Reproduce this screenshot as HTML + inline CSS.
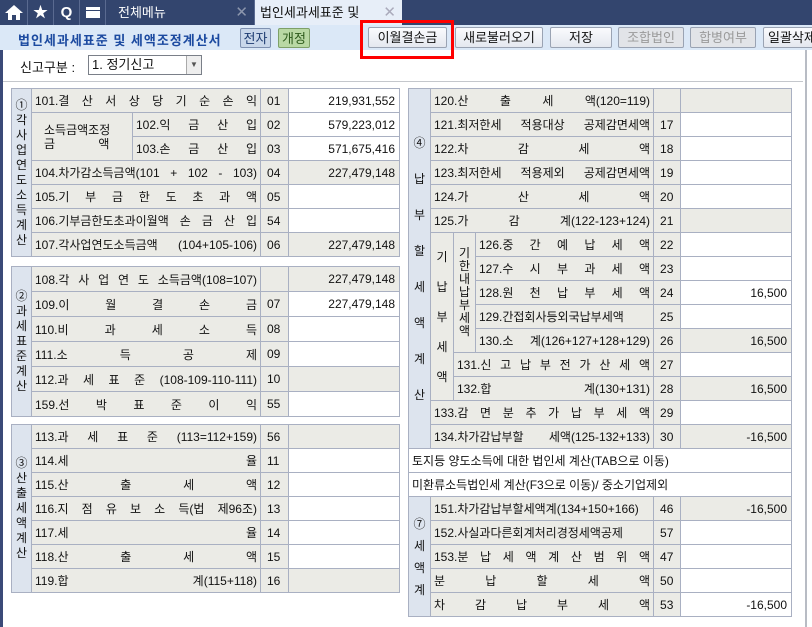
<!DOCTYPE html>
<html><head><meta charset="utf-8"><style>
*{box-sizing:border-box;margin:0;padding:0}
body{width:812px;height:627px;overflow:hidden;background:#fff;font-family:"Liberation Sans","Noto Sans CJK KR","NanumGothic",sans-serif;font-size:12px;color:#111;position:relative}
.top{position:absolute;left:0;top:0;width:812px;height:25px;background:#33456e}
.ic{position:absolute;top:0;height:25px;border-right:1px solid #5a6a90;color:#fff;font-weight:bold;font-size:15px;text-align:center;line-height:25px}
.tab{position:absolute;top:0;height:25px;line-height:25px;font-size:13px;color:#fff;padding-left:12px}
.x{position:absolute;right:6px;top:0;color:#8c96ad;font-size:15px}
.bar{position:absolute;left:0;top:25px;width:812px;height:25px;background:#dbe8f7}
.title{position:absolute;left:18px;top:30px;color:#1c4aa0;font-weight:bold;font-size:13px;letter-spacing:1px}
.b{position:absolute;top:27px;height:21px;border:1px solid #9aa3b3;border-radius:2px;background:linear-gradient(#fafbfd,#e4e8ef);text-align:center;line-height:19px;font-size:13px}
.dis{color:#9a9a9a;background:#e2e4e8}
table{position:absolute;border-collapse:collapse;table-layout:fixed}
td{border:1px solid #a9b0c2;height:24px;background:#ebebe6;padding:0 3px;white-space:nowrap;overflow:hidden;font-size:12px}
td.s{background:#dde4ee;text-align:center;line-height:15px;vertical-align:middle;padding:0}
td.l{text-align:justify;text-align-last:justify}
td.c{text-align:left;padding-left:6px}
td.v{text-align:right;padding-right:4px;background:#fff}
td.g{background:#ebebe6}
td.w{background:#fff;text-align:left;font-size:12px}
</style></head><body>
<div class="top"></div>
<div class="ic" style="left:0;width:28px"><svg width="28" height="25" viewBox="0 0 28 25"><path d="M14 5 L5 13 H8 V20 H12 V15 H16 V20 H20 V13 H23 Z" fill="#fff"/></svg></div>
<div class="ic" style="left:28px;width:26px">&#9733;</div>
<div class="ic" style="left:54px;width:26px">Q</div>
<div class="ic" style="left:80px;width:26px"><div style="position:absolute;left:6px;top:7px;width:14px;height:11px;background:#fff;border-top:3px solid #fff"></div><div style="position:absolute;left:6px;top:10px;width:14px;height:1px;background:#33456e"></div></div>
<div class="tab" style="left:106px;width:149px;background:#33456e;border-right:1px solid #5a6a90">전체메뉴<span class="x">✕</span></div>
<div class="tab" style="left:255px;width:147px;background:#e7eef8;color:#111;padding-left:5px">법인세과세표준 및<span class="x" style="color:#aab">✕</span></div>
<div class="bar"></div>
<div class="title">법인세과세표준 및 세액조정계산서</div>
<div class="b" style="left:240px;width:31px;top:28px;height:20px;background:#c9d7ea;border-color:#7e90b0;color:#1c3a70">전자</div>
<div class="b" style="left:278px;width:32px;top:28px;height:20px;background:#b9d8a4;border-color:#7ea068;color:#2d5a1c">개정</div>
<div class="b" style="left:368px;width:79px">이월결손금</div>
<div class="b" style="left:455px;width:88px">새로불러오기</div>
<div class="b" style="left:550px;width:62px">저장</div>
<div class="b dis" style="left:618px;width:66px">조합법인</div>
<div class="b dis" style="left:690px;width:66px">합병여부</div>
<div class="b" style="left:763px;width:60px;text-align:left;padding-left:4px">일괄삭제</div>
<div style="position:absolute;left:360px;top:20px;width:94px;height:39px;border:3px solid #f00"></div>
<div style="position:absolute;left:0;top:50px;width:3px;height:577px;background:#3b4a78"></div>
<div style="position:absolute;left:805px;top:50px;width:2px;height:577px;background:#b8bcc4"></div>
<div style="position:absolute;left:20px;top:57px;font-size:13px">신고구분 :</div>
<div style="position:absolute;left:88px;top:55px;width:114px;height:20px;border:1px solid #7a7f88;background:#fff;font-size:13px;padding-left:3px;line-height:18px">1. 정기신고<div style="position:absolute;right:0;top:0;width:15px;height:18px;border-left:1px solid #aaa;background:#eee;font-size:8px;text-align:center;color:#555">▼</div></div>
<div style="position:absolute;left:3px;top:81px;width:800px;height:1px;background:#c4c7cc"></div>

<table style="left:11px;top:88px;width:388px">
<col style="width:20px"><col style="width:101px"><col style="width:128px"><col style="width:28px"><col style="width:111px">
<tr><td class="s" rowspan="7">①<br>각<br>사<br>업<br>연<br>도<br>소<br>득<br>계<br>산</td><td class="l" colspan="2">101.결 산 서 상 당 기 순 손 익</td><td class="c">01</td><td class="v">219,931,552</td></tr>
<tr><td rowspan="2" style="padding-left:12px;line-height:14px">소득금액조정<br>금 &nbsp; &nbsp; &nbsp; &nbsp; &nbsp; &nbsp; 액</td><td class="l">102.익 금 산 입</td><td class="c">02</td><td class="v">579,223,012</td></tr>
<tr><td class="l">103.손 금 산 입</td><td class="c">03</td><td class="v">571,675,416</td></tr>
<tr><td class="l" colspan="2">104.차가감소득금액(101 + 102 - 103)</td><td class="c">04</td><td class="v g">227,479,148</td></tr>
<tr><td class="l" colspan="2">105.기 부 금 한 도 초 과 액</td><td class="c">05</td><td class="v"></td></tr>
<tr><td class="l" colspan="2">106.기부금한도초과이월액 손 금 산 입</td><td class="c">54</td><td class="v"></td></tr>
<tr><td class="l" colspan="2">107.각사업연도소득금액 (104+105-106)</td><td class="c">06</td><td class="v g">227,479,148</td></tr>
</table>

<table style="left:11px;top:266px;width:388px">
<col style="width:20px"><col style="width:229px"><col style="width:28px"><col style="width:111px">
<tr><td class="s" rowspan="6" style="height:150px">②<br>과<br>세<br>표<br>준<br>계<br>산</td><td class="l" style="height:25px">108.각 사 업 연 도 소득금액(108=107)</td><td class="c"></td><td class="v g">227,479,148</td></tr>
<tr><td class="l" style="height:25px">109.이 월 결 손 금</td><td class="c">07</td><td class="v">227,479,148</td></tr>
<tr><td class="l" style="height:25px">110.비 과 세 소 득</td><td class="c">08</td><td class="v"></td></tr>
<tr><td class="l" style="height:25px">111.소 득 공 제</td><td class="c">09</td><td class="v"></td></tr>
<tr><td class="l" style="height:25px">112.과 세 표 준 (108-109-110-111)</td><td class="c">10</td><td class="v g"></td></tr>
<tr><td class="l" style="height:25px">159.선 박 표 준 이 익</td><td class="c">55</td><td class="v"></td></tr>
</table>

<table style="left:11px;top:424px;width:388px">
<col style="width:20px"><col style="width:229px"><col style="width:28px"><col style="width:111px">
<tr><td class="s" rowspan="7">③<br>산<br>출<br>세<br>액<br>계<br>산</td><td class="l">113.과 세 표 준 (113=112+159)</td><td class="c">56</td><td class="v g"></td></tr>
<tr><td class="l">114.세 율</td><td class="c">11</td><td class="v"></td></tr>
<tr><td class="l">115.산 출 세 액</td><td class="c">12</td><td class="v"></td></tr>
<tr><td class="l">116.지 점 유 보 소 득(법 제96조)</td><td class="c">13</td><td class="v"></td></tr>
<tr><td class="l">117.세 율</td><td class="c">14</td><td class="v"></td></tr>
<tr><td class="l">118.산 출 세 액</td><td class="c">15</td><td class="v"></td></tr>
<tr><td class="l">119.합 계(115+118)</td><td class="c">16</td><td class="v g"></td></tr>
</table>

<table style="left:408px;top:88px;width:383px">
<col style="width:22px"><col style="width:23px"><col style="width:22px"><col style="width:178px"><col style="width:27px"><col style="width:111px">
<tr><td class="s" rowspan="15" style="line-height:36px">④<br>납<br>부<br>할<br>세<br>액<br>계<br>산</td><td class="l" colspan="3">120.산 출 세 액(120=119)</td><td class="c"></td><td class="v g"></td></tr>
<tr><td class="l" colspan="3">121.최저한세 적용대상 공제감면세액</td><td class="c">17</td><td class="v"></td></tr>
<tr><td class="l" colspan="3">122.차 감 세 액</td><td class="c">18</td><td class="v"></td></tr>
<tr><td class="l" colspan="3">123.최저한세 적용제외 공제감면세액</td><td class="c">19</td><td class="v"></td></tr>
<tr><td class="l" colspan="3">124.가 산 세 액</td><td class="c">20</td><td class="v"></td></tr>
<tr><td class="l" colspan="3">125.가 감 계(122-123+124)</td><td class="c">21</td><td class="v g"></td></tr>
<tr><td class="s" rowspan="7" style="background:#ebebe6;line-height:30px">기<br>납<br>부<br>세<br>액</td><td class="s" rowspan="5" style="background:#ebebe6;line-height:13px">기<br>한<br>내<br>납<br>부<br>세<br>액</td><td class="l">126.중 간 예 납 세 액</td><td class="c">22</td><td class="v"></td></tr>
<tr><td class="l">127.수 시 부 과 세 액</td><td class="c">23</td><td class="v"></td></tr>
<tr><td class="l">128.원 천 납 부 세 액</td><td class="c">24</td><td class="v">16,500</td></tr>
<tr><td class="l">129.간접회사등외국납부세액</td><td class="c">25</td><td class="v"></td></tr>
<tr><td class="l">130.소 계(126+127+128+129)</td><td class="c">26</td><td class="v g">16,500</td></tr>
<tr><td class="l" colspan="2">131.신 고 납 부 전 가 산 세 액</td><td class="c">27</td><td class="v"></td></tr>
<tr><td class="l" colspan="2">132.합 계(130+131)</td><td class="c">28</td><td class="v g">16,500</td></tr>
<tr><td class="l" colspan="3">133.감 면 분 추 가 납 부 세 액</td><td class="c">29</td><td class="v"></td></tr>
<tr><td class="l" colspan="3">134.차가감납부할 세액(125-132+133)</td><td class="c">30</td><td class="v g">-16,500</td></tr>
<tr><td class="w" colspan="6">토지등 양도소득에 대한 법인세 계산(TAB으로 이동)</td></tr>
<tr><td class="w" colspan="6">미환류소득법인세 계산(F3으로 이동)/ 중소기업제외</td></tr>
<tr><td class="s" rowspan="5" style="line-height:22px">⑦<br>세<br>액<br>계</td><td class="l" colspan="3">151.차가감납부할세액계(134+150+166)</td><td class="c">46</td><td class="v g">-16,500</td></tr>
<tr><td class="l" colspan="3">152.사실과다른회계처리경정세액공제</td><td class="c">57</td><td class="v"></td></tr>
<tr><td class="l" colspan="3">153.분 납 세 액 계 산 범 위 액</td><td class="c">47</td><td class="v"></td></tr>
<tr><td class="l" colspan="3">분 납 할 세 액</td><td class="c">50</td><td class="v"></td></tr>
<tr><td class="l" colspan="3">차 감 납 부 세 액</td><td class="c">53</td><td class="v">-16,500</td></tr>
</table>
</body></html>
